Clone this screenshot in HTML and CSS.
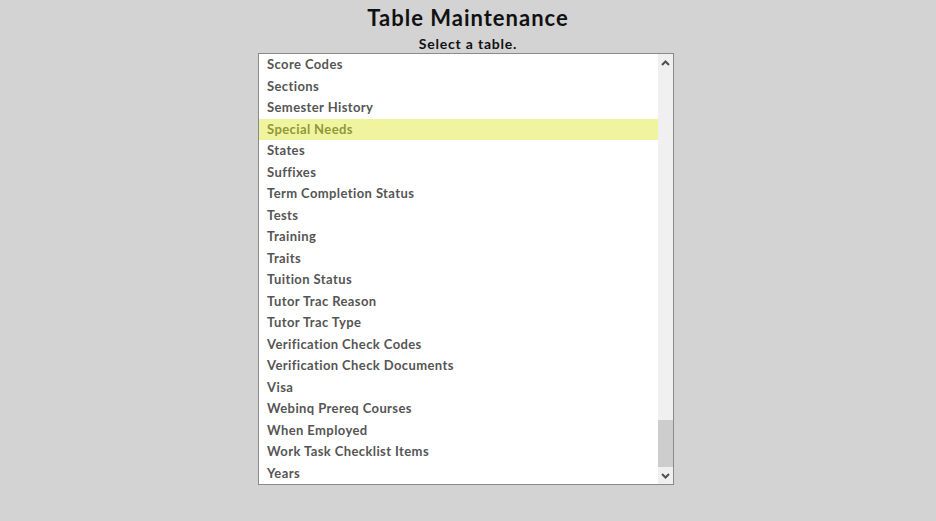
FILE: index.html
```html
<!DOCTYPE html>
<html>
<head>
<meta charset="utf-8">
<link rel="stylesheet" href="styles.css">
</head>
<body>
<div class="page">
  <h1 class="title">Table Maintenance</h1>
  <div class="subtitle">Select a table.</div>
  <div class="listbox">
    <ul class="items">
      <li>Score Codes</li>
      <li>Sections</li>
      <li>Semester History</li>
      <li class="selected">Special Needs</li>
      <li>States</li>
      <li>Suffixes</li>
      <li>Term Completion Status</li>
      <li>Tests</li>
      <li>Training</li>
      <li>Traits</li>
      <li>Tuition Status</li>
      <li>Tutor Trac Reason</li>
      <li>Tutor Trac Type</li>
      <li>Verification Check Codes</li>
      <li>Verification Check Documents</li>
      <li>Visa</li>
      <li>Webinq Prereq Courses</li>
      <li>When Employed</li>
      <li>Work Task Checklist Items</li>
      <li>Years</li>
    </ul>
    <div class="scrollbar">
      <div class="arrow up"><svg width="9" height="6" viewBox="0 0 9 6"><path d="M1 5 L4.5 1.5 L8 5" fill="none" stroke="#505050" stroke-width="2"/></svg></div>
      <div class="track"><div class="thumb"></div></div>
      <div class="arrow down"><svg width="9" height="6" viewBox="0 0 9 6"><path d="M1 1 L4.5 4.5 L8 1" fill="none" stroke="#505050" stroke-width="2"/></svg></div>
    </div>
  </div>
</div>
</body>
</html>
```
FILE: styles.css
```css
html, body {
  margin: 0;
  padding: 0;
  background: #d3d3d3;
}
body {
  font-family: "Lato", "DejaVu Sans", sans-serif;
}
.page {
  display: flex;
  flex-direction: column;
  align-items: center;
  padding-top: 5px;
}
.title {
  margin: 0;
  font-size: 22px;
  letter-spacing: 1px;
  font-weight: bold;
  color: #111;
  line-height: 26px;
}
.subtitle {
  margin-top: 5px;
  font-size: 14px;
  letter-spacing: 0.8px;
  font-weight: bold;
  color: #111;
  line-height: 16px;
}
.listbox {
  margin-top: 1px;
  margin-left: -4px;
  width: 414px;
  height: 430px;
  border: 1px solid #8a8a8a;
  background: #fff;
  display: flex;
}
.items {
  list-style: none;
  margin: 0;
  padding: 0;
  flex: 1;
  overflow: hidden;
}
.items li {
  height: 21.5px;
  line-height: 21.5px;
  padding-left: 8px;
  font-size: 13px;
  letter-spacing: 0.4px;
  font-weight: bold;
  color: #555;
}
.items li.selected {
  background: #f0f49f;
  color: #8e983a;
}
.scrollbar {
  width: 15px;
  background: #f0f0f0;
  display: flex;
  flex-direction: column;
}
.arrow {
  height: 17px;
  display: flex;
  align-items: center;
  justify-content: center;
}
.track {
  flex: 1;
  display: flex;
  flex-direction: column;
  justify-content: flex-end;
}
.thumb {
  height: 47px;
  background: #cdcdcd;
}
```
